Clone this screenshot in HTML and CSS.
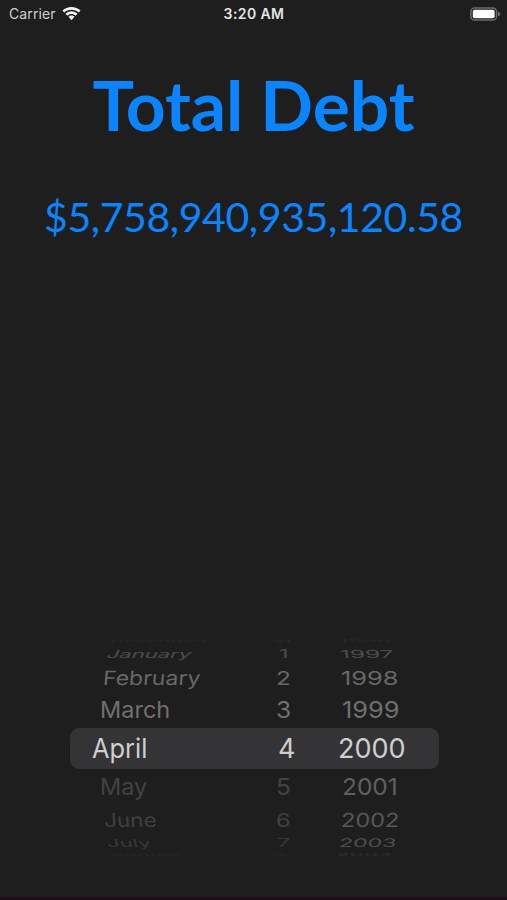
FILE: index.html
```
<!DOCTYPE html>
<html lang="en">
<head>
  <meta charset="UTF-8">
  <title>Total Debt</title>
  <link rel="stylesheet" href="styles.css">
</head>
<body>
<div class="screen">
  <div class="status-bar">
    <div class="carrier">
      <span>Carrier</span>
      <svg width="19" height="14" viewBox="0 0 19 14" fill="#f4f4f4">
        <path d="M9.5 0C6 0 2.900 1.300.5 3.600l1.700 1.900C4.200 3.700 6.700 2.800 9.500 2.800s5.300.9 7.300 2.700l1.700-1.900C16.100 1.300 13 0 9.500 0z"/>
        <path d="M9.500 4.300c-2.300 0-4.400.9-6 2.400l1.800 2c1.100-1.100 2.600-1.700 4.200-1.700s3.100.6 4.200 1.700l1.800-2c-1.600-1.500-3.700-2.400-6-2.400z"/>
        <path d="M9.500 8.500c-1.200 0-2.200.5-3 1.300l3 3.400 3-3.400c-.8-.8-1.800-1.300-3-1.300z"/>
      </svg>
    </div>
    <div class="time">3:20 AM</div>
    <div class="battery">
      <svg width="31" height="14" viewBox="0 0 31 14">
        <rect x=".9" y=".9" width="25.600" height="12.200" rx="3.600" fill="none" stroke="#6c6c6c" stroke-width="1.500"/>
        <rect x="2.800" y="2.700" width="21.800" height="8.600" rx="1.800" fill="#fff"/>
        <path d="M28 4.500c1.300.4 2.200 1.300 2.200 2.500s-.9 2.100-2.200 2.500z" fill="#6c6c6c"/>
      </svg>
    </div>
  </div>

  <h1>Total Debt</h1>
  <p class="amount">$5,758,940,935,120.58</p>

  <!-- date wheel -->
  <div class="picker">
    <div class="row up4"><span class="month">December</span><span class="day">31</span><span class="year">1996</span></div>
    <div class="row up3"><span class="month">January</span><span class="day">1</span><span class="year">1997</span></div>
    <div class="row up2"><span class="month">February</span><span class="day">2</span><span class="year">1998</span></div>
    <div class="row up1"><span class="month">March</span><span class="day">3</span><span class="year">1999</span></div>
    <div class="row selected"><span class="month">April</span><span class="day">4</span><span class="year">2000</span></div>
    <div class="row down1"><span class="month">May</span><span class="day">5</span><span class="year">2001</span></div>
    <div class="row down2"><span class="month">June</span><span class="day">6</span><span class="year">2002</span></div>
    <div class="row down3"><span class="month">July</span><span class="day">7</span><span class="year">2003</span></div>
    <div class="row down4"><span class="month">August</span><span class="day">8</span><span class="year">2004</span></div>
  </div>
</div>
</body>
</html>
```

FILE: styles.css
```
body {
  margin: 0;
  background-color: #1e1e1e;
}

.screen {
  box-sizing: border-box;
  height: 900px;
  display: flex;
  flex-direction: column;
  overflow: hidden;
  border-bottom: #1b1116 3px solid;
  font-family: Inter, "Liberation Sans", sans-serif;
}

/* status bar */
.status-bar {
  display: grid;
  grid-template-columns: 1fr auto 1fr;
  align-items: center;
  height: 27px;
  padding: 0 6px 0 9px;
  font-size: 14px;
  line-height: 27px;
  color: #d0d0d0;
}

.status-bar svg {
  display: block;
}

.carrier {
  display: flex;
  align-items: center;
  gap: 6px;
  letter-spacing: .1px;
}

.time {
  margin-right: 2px;
  font-weight: 600;
  letter-spacing: .4px;
  color: #e4e4e4;
}

.battery {
  justify-self: end;
}

h1 {
  margin: 35px 0 0;
  font-family: Lato, sans-serif;
  font-size: 69.5px;
  line-height: 84px;
  font-weight: 700;
  text-align: center;
  color: #0a84ff;
}

.amount {
  margin: 46px 0 0;
  font-family: Lato, sans-serif;
  font-size: 41px;
  line-height: 50px;
  letter-spacing: -.4px;
  text-align: center;
  color: #0a84ff;
}

/* date wheel */
.picker {
  width: 369px;
  margin: auto 0 39px 70px;
}

.row {
  display: grid;
  grid-template-columns: 184px 62px 1fr;
  grid-template-rows: 100%;
  align-items: center;
  box-sizing: border-box;
  padding-left: 22px;
  font-size: 23.5px;
  line-height: 0;
  white-space: nowrap;
  color: #606060;
}

.row span {
  justify-self: start;
  line-height: 30px;
  transform-origin: left center;
}

.selected {
  height: 41px;
  border-radius: 9px;
  background-color: #343436;
  font-size: 27px;
  color: #cfcfcf;
}

.selected .month {
  transform: scaleX(.94);
}

.selected .day {
  margin-left: 2px;
}

.up1 { height: 37px; color: #707070; }
.up1 .month { margin-left: 8px; }
.up1 .day { transform: scaleX(1.04); }
.up1 .year { margin-left: 4px; transform: scaleX(1.08); }

.up2 { height: 27px; color: #686868; }
.up2 .month { margin-left: 11px; transform: scale(.98, .84) skewX(-4deg); }
.up2 .day { transform: scale(1.04, .82); }
.up2 .year { margin-left: 3px; transform: scale(1.08, .82); }

.up3 { height: 21px; color: #4c4c4c; }
.up3 .month { margin-left: 15px; transform: scale(.94, .47) skewX(-12deg); }
.up3 .day { margin-left: 3px; transform: scaleY(.47); }
.up3 .year { margin-left: 2px; transform: scale(1.04, .47) skewX(4deg); }

.up4 { height: 5px; color: #292929; }
.up4 .month { margin-left: 18px; transform: scale(.85, .1); }
.up4 .day { margin-left: -3px; transform: scale(.75, .1); }
.up4 .year { margin-left: 1px; transform: scale(.98, .12); }

.down1 { height: 36px; color: #434343; }
.down1 .month { margin-left: 8px; }
.down1 .day { transform: scaleX(1.04); }
.down1 .year { margin-left: 4px; transform: scaleX(1.04); color: #606060; }

.down2 { height: 29px; color: #404040; }
.down2 .month { margin-left: 12px; transform: scale(.96, .82) skewX(3deg); }
.down2 .day { transform: scaleY(.82); }
.down2 .year { margin-left: 3px; transform: scaleY(.82) skewX(-3deg); color: #585858; }

.down3 { height: 18px; color: #383838; }
.down3 .month { margin-left: 15px; transform: scale(.94, .47) skewX(8deg); }
.down3 .day { margin-left: 1px; transform: scaleY(.47); }
.down3 .year { margin-left: 1px; transform: scale(.98, .5) skewX(-6deg); color: #4e4e4e; }

.down4 { height: 6px; color: #272727; }
.down4 .month { margin-left: 18px; transform: scale(.9, .1); }
.down4 .day { margin-left: -2px; transform: scale(.85, .1); }
.down4 .year { margin-left: -2px; transform: scale(.96, .14); color: #303030; }
```
